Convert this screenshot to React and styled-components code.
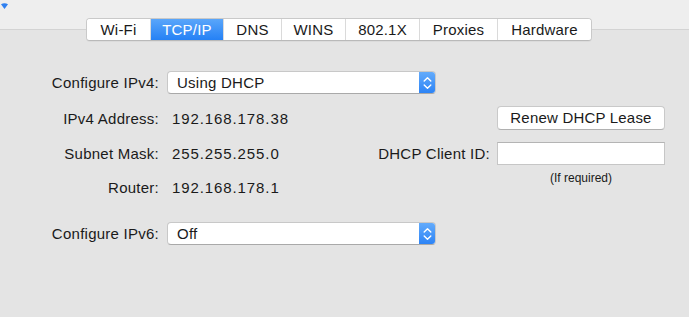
import React from 'react';
import styled, { createGlobalStyle } from 'styled-components';

const GlobalStyle = createGlobalStyle`
  html, body {
    margin: 0;
    padding: 0;
    background: #e4e4e4;
  }
  * {
    box-sizing: border-box;
  }
`;

const tabs = [
    { name: 'Wi-Fi', width: 63 },
    { name: 'TCP/IP', width: 73 },
    { name: 'DNS', width: 58 },
    { name: 'WINS', width: 64 },
    { name: '802.1X', width: 74 },
    { name: 'Proxies', width: 78 },
    { name: 'Hardware', width: 94 },
];

function Stepper() {
    return (
        <StepperBox>
            <svg width="9" height="14" viewBox="0 0 9 14" fill="none">
                <path d="M1.2 5 L4.5 1.7 L7.8 5" stroke="#fff" strokeWidth="1.4" strokeLinecap="round" strokeLinejoin="round" />
                <path d="M1.2 9 L4.5 12.3 L7.8 9" stroke="#fff" strokeWidth="1.4" strokeLinecap="round" strokeLinejoin="round" />
            </svg>
        </StepperBox>
    );
}

function Popup({ value }) {
    return (
        <PopupBox>
            <PopupText>{value}</PopupText>
            <Stepper />
        </PopupBox>
    );
}

export default function App() {
    return (
        <>
            <GlobalStyle />
            <Window>
                <Header>
                    <Corner>
                        <svg width="10" height="8" viewBox="0 0 10 8">
                            <path d="M1 2.2 Q4.5 0.4 8 2.2 L4.5 7 Z" fill="#2f80f0" />
                        </svg>
                    </Corner>
                    <TabBar>
                        {tabs.map((tab) => (
                            <Tab key={tab.name} $width={tab.width} $active={tab.name === 'TCP/IP'}>{tab.name}</Tab>
                        ))}
                    </TabBar>
                </Header>
                <Form>
                    <Row $height={23}>
                        <Label>Configure IPv4:</Label>
                        <Popup value="Using DHCP" />
                    </Row>
                    <Row $height={24} $top={12}>
                        <Label>IPv4 Address:</Label>
                        <Value>192.168.178.38</Value>
                        <Button>Renew DHCP Lease</Button>
                    </Row>
                    <Row $height={23} $top={12}>
                        <Label>Subnet Mask:</Label>
                        <Value>255.255.255.0</Value>
                        <SideLabel>DHCP Client ID:</SideLabel>
                        <Field />
                    </Row>
                    <Row $height={26} $top={5} $align="flex-end">
                        <Label>Router:</Label>
                        <Value>192.168.178.1</Value>
                        <Note>(If required)</Note>
                    </Row>
                    <Row $height={23} $top={26}>
                        <Label>Configure IPv6:</Label>
                        <Popup value="Off" />
                    </Row>
                </Form>
            </Window>
        </>
    );
}

const Window = styled.div`
    width: 689px;
    height: 317px;
    overflow: hidden;
    background: #e4e4e4;
    font-family: "Liberation Sans", Arial, sans-serif;
    font-size: 15px;
    color: #1a1a1a;
`;
const Header = styled.div`
    height: 30px;
    background: #eeeeee;
    border-bottom: 1px solid #d3d3d3;
    display: flex;
    align-items: flex-start;
`;
const Corner = styled.div`
    width: 86px;
    padding: 2px 0 0 0;
    line-height: 0;
`;
const TabBar = styled.div`
    position: relative;
    z-index: 1;
    margin-top: 18px;
    display: flex;
    height: 23px;
    background: #fff;
    border: 1px solid #c9c9c9;
    border-bottom-color: #b9b9b9;
    border-radius: 4px;
    overflow: hidden;
    box-shadow: 0 1px 0 rgba(0, 0, 0, 0.04);
`;
const Tab = styled.div`
    width: ${(p) => p.$width}px;
    text-align: center;
    line-height: 21px;
    white-space: nowrap;
    letter-spacing: 0.2px;
    color: ${(p) => (p.$active ? '#fff' : '#1a1a1a')};
    background: ${(p) => (p.$active ? 'linear-gradient(#5aa6fa, #2581f5)' : '#fff')};
    & + & {
        border-left: 1px solid ${(p) => (p.$active ? '#3b8ef7' : '#dadada')};
    }
`;
const Form = styled.div`
    padding-top: 41px;
`;
const Row = styled.div`
    display: flex;
    align-items: ${(p) => p.$align || 'center'};
    height: ${(p) => p.$height}px;
    margin-top: ${(p) => p.$top || 0}px;
`;
const Label = styled.div`
    width: 159px;
    flex-shrink: 0;
    text-align: right;
    line-height: 17px;
    letter-spacing: 0.25px;
    white-space: nowrap;
`;
const Value = styled.div`
    flex: 1;
    margin-left: 13px;
    line-height: 17px;
    letter-spacing: 0.9px;
    white-space: nowrap;
`;
const PopupBox = styled.div`
    display: flex;
    width: 269px;
    height: 23px;
    margin-left: 8px;
    background: #fff;
    border: 1px solid #c8c8c8;
    border-bottom-color: #a9a9a9;
    border-radius: 4px;
    overflow: hidden;
`;
const PopupText = styled.div`
    flex: 1;
    padding-left: 9px;
    line-height: 21px;
    letter-spacing: 0.25px;
`;
const StepperBox = styled.div`
    width: 16px;
    display: flex;
    align-items: center;
    justify-content: center;
    background: linear-gradient(#63abfb, #2d84f6);
`;
const Button = styled.div`
    width: 168px;
    height: 24px;
    margin-right: 24px;
    background: #fff;
    border: 1px solid #c9c9c9;
    border-bottom-color: #b0b0b0;
    border-radius: 4px;
    text-align: center;
    line-height: 22px;
    letter-spacing: 0.2px;
    white-space: nowrap;
`;
const SideLabel = styled.div`
    line-height: 17px;
    letter-spacing: 0.25px;
    white-space: nowrap;
`;
const Field = styled.div`
    width: 168px;
    height: 23px;
    margin-left: 7px;
    margin-right: 24px;
    background: #fff;
    border: 1px solid #c6c6c6;
    border-top-color: #b4b4b4;
`;
const Note = styled.div`
    align-self: flex-start;
    width: 168px;
    margin-right: 24px;
    padding-top: 1px;
    text-align: center;
    font-size: 12px;
    line-height: 14px;
`;
